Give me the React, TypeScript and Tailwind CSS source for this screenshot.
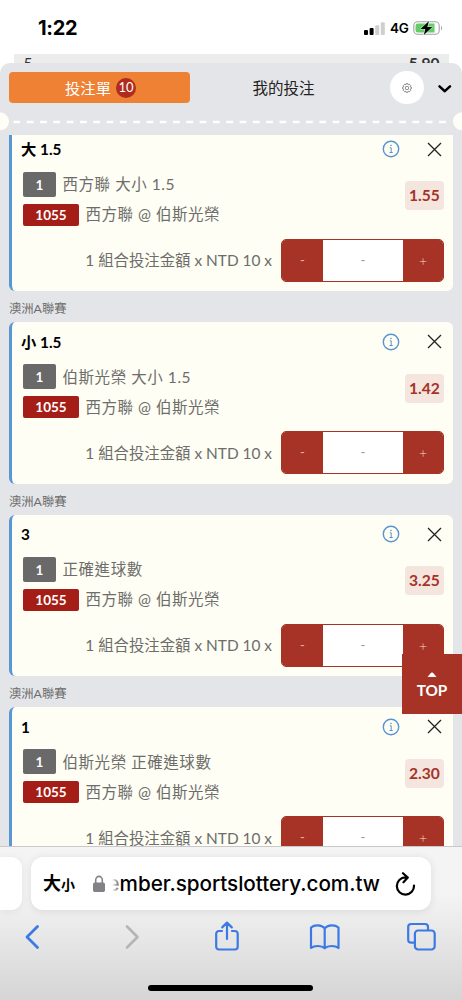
import React from "react";

type Bet = { title: string; desc: string; odds: string };

const bets: Bet[] = [
  { title: "大 1.5", desc: "西方聯 大小 1.5", odds: "1.55" },
  { title: "小 1.5", desc: "伯斯光榮 大小 1.5", odds: "1.42" },
  { title: "3", desc: "正確進球數", odds: "3.25" },
  { title: "1", desc: "伯斯光榮 正確進球數", odds: "2.30" },
];

function StatusBar() {
  return (
    <div className="flex h-[54px] shrink-0 items-start bg-white pl-[38px] pr-[19px] font-['Inter','Liberation_Sans',sans-serif] text-black">
      <span className="mt-[14px] text-[20px] leading-[28px] font-bold tracking-[-0.3px]">1:22</span>
      <div className="mt-[18px] ml-auto flex h-[20px] items-center">
        <svg width="21" height="13" viewBox="0 0 21 13">
          <rect x="0" y="8" width="4" height="5" rx="1" />
          <rect x="5.6" y="6" width="4" height="7" rx="1" />
          <rect x="11.2" y="3.3" width="4" height="9.7" rx="1" fill="#cfcfcf" />
          <rect x="16.8" y="0.3" width="4" height="12.7" rx="1" fill="#cfcfcf" />
        </svg>
        <span className="ml-[5px] w-[19px] text-[13.5px] leading-[20px] font-semibold tracking-[-0.3px]">4G</span>
        <svg className="ml-[4px]" width="30" height="16" viewBox="0 0 30 16">
          <rect x="0.8" y="1.8" width="25.4" height="12.4" rx="3.8" fill="white" stroke="#a3a3a3" strokeWidth="1.1" />
          <path d="M4.8 3.5H21.5V12.5H4.8A2.3 2.3 0 0 1 2.5 10.2V5.8A2.3 2.3 0 0 1 4.8 3.5Z" fill="#65cc6b" />
          <path d="M28 6V10.2C29.3 9.7 29.3 6.5 28 6Z" fill="#999" />
          <path d="M16 1L7.5 8.9H12.3L10.8 15L19.3 7.1H14.3Z" fill="black" stroke="white" strokeWidth="0.8" paintOrder="stroke" />
        </svg>
      </div>
    </div>
  );
}

function SlipHeader() {
  return (
    <div className="relative z-10 h-[72px] shrink-0 rounded-t-[10px] bg-[#e4e5e8]">
      <div className="flex items-start px-[9px] pt-[9px]">
        <div className="flex h-[31px] w-[181px] items-center justify-center rounded-[4px] bg-[#ee8133] pl-[2px] text-[15.3px] text-white">
          <span className="pt-px leading-[30px]">投注單</span>
          <span className="ml-[5px] flex h-[20px] w-[20px] items-center justify-center rounded-full bg-[#b02b1e] text-[13px] leading-none">10</span>
        </div>
        <div className="h-[31px] w-[187px] pt-px text-center text-[15.5px] leading-[31px] text-[#222]">我的投注</div>
        <div className="-mt-[1px] ml-[13px] flex h-[33px] w-[34px] items-center justify-center rounded-full bg-white">
          <svg width="10" height="10" viewBox="0 0 24 24" fill="none" stroke="#666" strokeWidth="1.7" strokeLinejoin="round">
            <path d="M9.7 1.5h4.6l.7 3.1 2.7-1.7 3.3 3.3-1.7 2.7 3.1.8v4.6l-3.1.7 1.7 2.7-3.3 3.3-2.7-1.7-.7 3.1H9.7L9 19.3 6.3 21 3 17.7 4.7 15l-3.1-.7V9.7L4.7 9 3 6.2l3.3-3.3L9 4.6z" />
            <circle cx="12" cy="12" r="4" />
          </svg>
        </div>
        <svg className="mt-[12px] ml-[13px]" width="15" height="10" viewBox="0 0 15 10" fill="none" stroke="black" strokeWidth="2.5" strokeLinecap="round" strokeLinejoin="round">
          <path d="M2.5 2.4L7.8 7.2L13 2.4" />
        </svg>
      </div>
      <svg className="absolute top-[48px] left-0" width="462" height="22" viewBox="0 0 462 22">
        <path d="M13.5 11H451" stroke="white" strokeWidth="2.4" strokeDasharray="6.7 6.6" strokeLinecap="butt" />
        <circle cx="0" cy="10.3" r="9" fill="#fefef7" />
        <circle cx="462" cy="10.3" r="9" fill="#fefef7" />
      </svg>
    </div>
  );
}

function InfoIcon() {
  return (
    <svg width="18" height="18" viewBox="0 0 18 18" fill="none" stroke="#5794d0">
      <circle cx="9" cy="9" r="7.7" strokeWidth="1.4" />
      <path d="M7.8 7.8H9.2V12.4M7.5 12.5H10.7" strokeWidth="1" />
      <circle cx="9" cy="5.4" r="0.5" strokeWidth="0.8" />
    </svg>
  );
}

function BetCard({ bet }: { bet: Bet }) {
  return (
    <div className="h-[161.5px] rounded-[6px] border-l-[3px] border-[#5797d2] bg-[#fefef4] pr-[9px] pl-[9px]">
      <div className="flex h-[39px] items-center">
        <span className="pt-px text-[15.3px] font-bold text-black">{bet.title}</span>
        <span className="ml-auto"><InfoIcon /></span>
        <svg className="ml-[27px] mr-[2px]" width="15" height="15" viewBox="0 0 15 15" stroke="#222" strokeWidth="1.3">
          <path d="M1 1L14 14M14 1L1 14" />
        </svg>
      </div>
      <div className="flex h-[61px] pt-[3px] pl-[2px]">
        <div className="flex flex-col text-[#6d6d6b]">
          <div className="flex h-[25px] items-center">
            <span className="h-[25px] w-[33px] rounded-[2px] bg-[#696969] text-center text-[13.5px] leading-[26px] font-bold text-white">1</span>
            <span className="ml-[6.5px] pt-[1.5px] text-[15.5px] tracking-[0.55px] whitespace-nowrap">{bet.desc}</span>
          </div>
          <div className="mt-[7px] flex h-[22px] items-center">
            <span className="h-[22px] w-[56px] rounded-[2px] bg-[#a51d17] text-center text-[13.5px] leading-[22px] font-bold text-white">1055</span>
            <span className="ml-[6.5px] pt-px text-[15.5px] tracking-[0.5px] whitespace-nowrap">西方聯 @ 伯斯光榮</span>
          </div>
        </div>
        <span className="mt-[9.5px] ml-auto h-[29px] w-[39px] rounded-[4px] bg-[#f4e5df] text-center text-[15.6px] leading-[29px] font-bold text-[#a53328]">{bet.odds}</span>
      </div>
      <div className="mt-[9px] flex h-[43px] items-center justify-end">
        <span className="mr-[9px] pt-[1.5px] text-[15.4px] whitespace-nowrap text-[#6d6d6b]">1 組合投注金額 x NTD 10 x</span>
        <div className="flex h-[43px] w-[163px] overflow-hidden rounded-[5px] border border-[#a73326] bg-white text-center text-[13px] leading-[41px]">
          <span className="w-[41px] bg-[#a73326] text-[#e3b2a8]">-</span>
          <span className="flex-1 text-[#999]">-</span>
          <span className="w-[40px] bg-[#a73326] text-[14px] font-light text-[#f3d8cf]">+</span>
        </div>
      </div>
    </div>
  );
}

function BrowserBar() {
  return (
    <div className="relative z-20 h-[154px] shrink-0 border-t border-[#c9c9cb] bg-linear-to-b from-[#f4f4f5] from-30% to-[#d5d5d6] font-['Inter','Liberation_Sans','Noto_Sans_CJK_TC',sans-serif]">
      <div className="flex pt-[10px]">
        <div className="h-[53px] w-[22px] rounded-r-[11px] bg-white shadow-[0_1px_8px_rgba(0,0,0,0.07)]" />
        <div className="ml-[9px] flex h-[53px] w-[400px] items-center rounded-[12px] bg-white pl-[12px] shadow-[0_1px_8px_rgba(0,0,0,0.1)]">
          <span className="flex w-[34px] items-baseline pt-[2px] leading-[30px] font-bold"><span className="text-[18px]">大</span><span className="text-[14px]">小</span></span>
          <svg className="ml-[16px]" width="12" height="18" viewBox="0 0 12 18">
            <path d="M2.7 9V5A3.3 3.6 0 0 1 9.3 5V9" fill="none" stroke="#828286" strokeWidth="1.6" />
            <rect x="0" y="7.5" width="12" height="9.5" rx="1.7" fill="#828286" />
          </svg>
          <span className="ml-[2.5px] flex w-[276px] text-[20.7px] leading-[30px] font-medium tracking-[-0.05px] whitespace-nowrap text-black">
            <span className="bg-linear-to-r from-transparent from-35% to-[#555] bg-clip-text text-transparent">e</span>mber.sportslottery.com.tw
          </span>
          <svg className="ml-[10px] shrink-0" width="22" height="24" viewBox="0 0 22 24" fill="none" stroke="black" strokeWidth="2.2" strokeLinecap="round" strokeLinejoin="round">
            <path d="M13.5 5.4H11.5A8.6 8.6 0 1 0 20 13.5M9 1.2L13.8 5.6L9.5 10.2" />
          </svg>
        </div>
      </div>
      <div className="mt-[10px] flex items-center pl-[24px] text-[#3b7ae4]">
        <svg width="16" height="34" viewBox="0 0 16 34" fill="none" stroke="currentColor" strokeWidth="2.8" strokeLinecap="round" strokeLinejoin="round"><path d="M13.5 6.5L3 17L13.5 27.5" /></svg>
        <svg className="ml-[85px]" width="16" height="34" viewBox="0 0 16 34" fill="none" stroke="#b5b5b7" strokeWidth="2.6" strokeLinecap="round" strokeLinejoin="round"><path d="M2 6.5L12.5 17L2 27.5" /></svg>
        <svg className="ml-[73px]" width="27" height="34" viewBox="0 0 27 34" fill="none" stroke="currentColor" strokeWidth="2.2" strokeLinecap="round" strokeLinejoin="round">
          <path d="M8 11H5A2.7 2.7 0 0 0 2.2 13.7V26.8A2.7 2.7 0 0 0 5 29.5H21A2.7 2.7 0 0 0 23.7 26.8V13.7A2.7 2.7 0 0 0 21 11H18M13 19V3M8.2 7.4L13 2.6L17.8 7.4" />
        </svg>
        <svg className="ml-[67px]" width="33" height="34" viewBox="0 0 33 34" fill="none" stroke="currentColor" strokeWidth="2.2" strokeLinecap="round" strokeLinejoin="round">
          <path d="M16.7 8.3C13.5 4.6 6.5 4.6 3 7.5V28C6.5 25.3 13.5 25.3 16.7 28.3C20 25.3 27 25.3 30.5 28V7.5C27 4.6 20 4.6 16.7 8.3ZM16.7 8.3V28" />
        </svg>
        <svg className="ml-[65px]" width="31" height="34" viewBox="0 0 31 34" fill="none" stroke="currentColor" strokeWidth="2.2" strokeLinejoin="round">
          <path d="M8.7 22.7H5.2A3 3 0 0 1 2.2 19.7V7A3 3 0 0 1 5.2 4H19A3 3 0 0 1 22 7V10.5" />
          <rect x="8.9" y="10.5" width="19.8" height="19" rx="3.2" />
        </svg>
      </div>
      <div className="mt-[31px] ml-[148px] h-[6px] w-[165px] rounded-full bg-black" />
    </div>
  );
}

export default function App() {
  return (
    <div className="relative flex h-[1000px] w-[462px] flex-col overflow-hidden bg-white font-['Lato','Noto_Sans_CJK_TC',sans-serif]">
      <StatusBar />
      <div className="relative mx-auto -mb-[11px] flex h-[20px] w-[435px] shrink-0 justify-between bg-[#ececed] pr-[9px] pl-[10px] text-[15.5px] leading-[18px] text-[#333]">
        <span>5</span>
        <span className="font-bold">5.90</span>
      </div>
      <SlipHeader />
      <div className="min-h-0 flex-1 overflow-hidden bg-[#e4e5e8] px-[9px]">
        <div className="-mt-[5.5px]">
          {bets.map((bet, i) => (
            <React.Fragment key={bet.title}>
              {i > 0 && <div className="h-[31px] pt-[2px] text-[12.3px] leading-[31px] text-[#6d6d6d]">澳洲A聯賽</div>}
              <BetCard bet={bet} />
            </React.Fragment>
          ))}
        </div>
      </div>
      <BrowserBar />
      <div className="absolute top-[654px] right-0 z-10 flex h-[60px] w-[60px] flex-col items-center bg-[#a73326] text-white">
        <svg className="mt-[18px]" width="10" height="5" viewBox="0 0 10 5" fill="currentColor"><path d="M0.5 5L4 0.8Q5 0 6 0.8L9.5 5Z" /></svg>
        <span className="mt-[4px] text-[15.3px] leading-[18px] font-bold">TOP</span>
      </div>
    </div>
  );
}
